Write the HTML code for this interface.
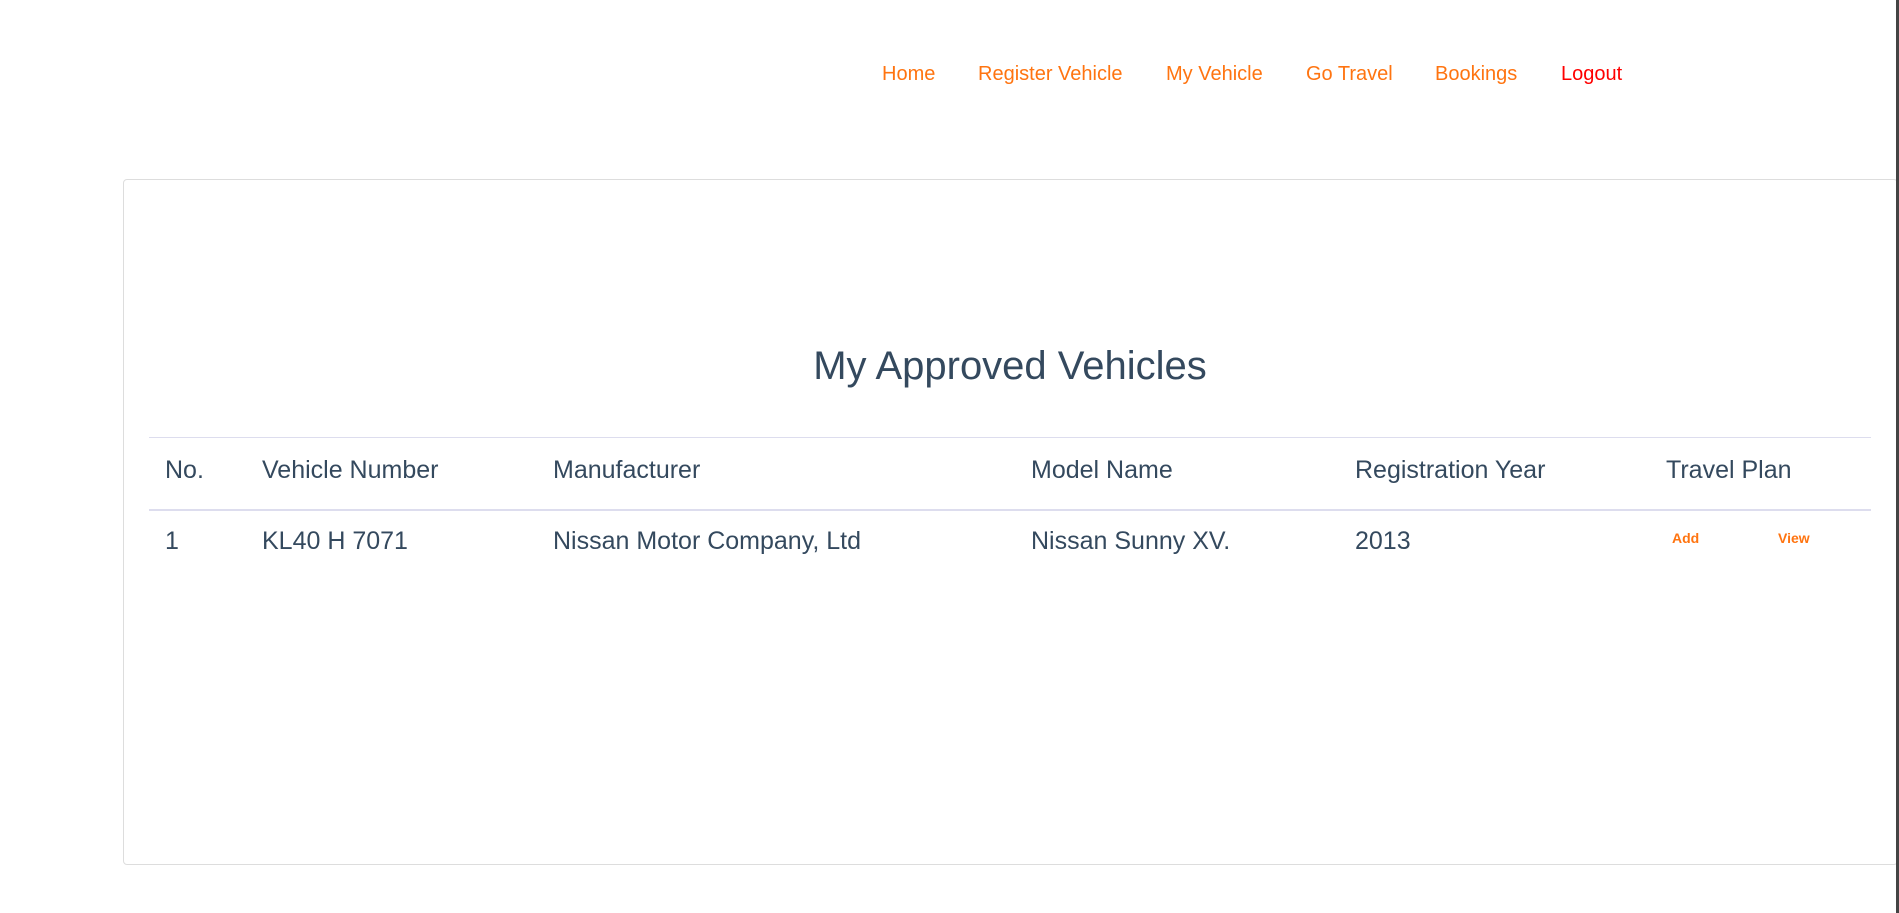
<!DOCTYPE html>
<html><head><style>
body{margin:0;width:1899px;height:913px;background:#fff;font-family:"Liberation Sans",sans-serif;position:relative;overflow:hidden}
.a{position:absolute;white-space:nowrap}
.nav{top:63px;font-size:20px;color:#ff7410}
.card{position:absolute;left:123px;top:179px;width:1775px;height:686px;border:1px solid #ddd;border-radius:4px;box-sizing:border-box}
.h{color:#34495e;font-size:25px}
.line{position:absolute;left:149px;width:1722px;background:#dde}
</style></head><body>
<div class="a nav" style="left:882px">Home</div>
<div class="a nav" style="left:978px">Register Vehicle</div>
<div class="a nav" style="left:1166px">My Vehicle</div>
<div class="a nav" style="left:1306px">Go Travel</div>
<div class="a nav" style="left:1435px">Bookings</div>
<div class="a nav" style="left:1561px;color:#f00">Logout</div>
<div class="card"></div>
<div style="position:absolute;left:1896px;top:0;width:3px;height:913px;background:#444"></div>
<div class="a" style="left:0;width:2020px;text-align:center;top:344px;font-size:40px;color:#34495e">My Approved Vehicles</div>
<div class="line" style="top:437px;height:1px"></div>
<div class="line" style="top:509px;height:2px"></div>
<div class="a h" style="top:456px;left:165px">No.</div>
<div class="a h" style="top:456px;left:262px">Vehicle Number</div>
<div class="a h" style="top:456px;left:553px">Manufacturer</div>
<div class="a h" style="top:456px;left:1031px">Model Name</div>
<div class="a h" style="top:456px;left:1355px">Registration Year</div>
<div class="a h" style="top:456px;left:1666px">Travel Plan</div>
<div class="a h" style="top:527px;left:165px">1</div>
<div class="a h" style="top:527px;left:262px">KL40 H 7071</div>
<div class="a h" style="top:527px;left:553px">Nissan Motor Company, Ltd</div>
<div class="a h" style="top:527px;left:1031px">Nissan Sunny XV.</div>
<div class="a h" style="top:527px;left:1355px">2013</div>
<div class="a" style="top:530px;left:1672px;font-size:14px;font-weight:bold;color:#ff7410">Add</div>
<div class="a" style="top:530px;left:1778px;font-size:14px;font-weight:bold;color:#ff7410">View</div>
</body></html>
